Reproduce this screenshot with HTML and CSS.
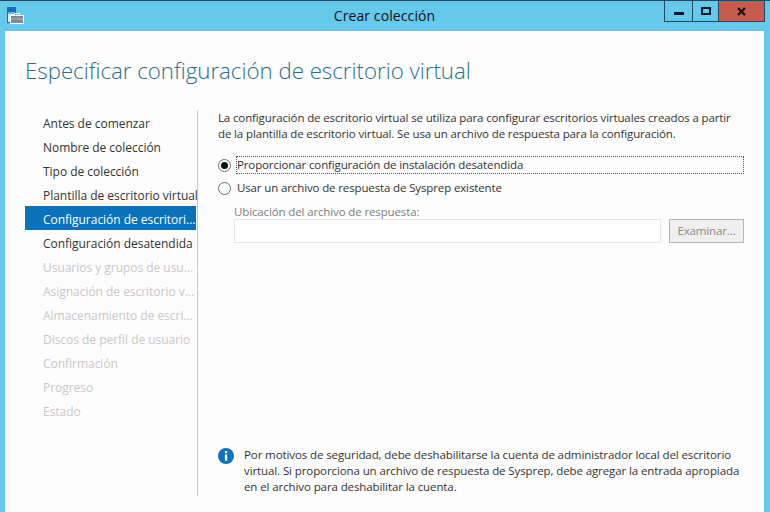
FILE: index.html
```html
<!DOCTYPE html>
<html lang="es">
<head>
<meta charset="utf-8">
<title>Crear colección</title>
<link rel="stylesheet" href="styles.css">
</head>
<body>
<div class="window">
  <header class="titlebar">
    <svg class="appicon" width="17" height="18" viewBox="0 0 17 18">
      <rect x="0.5" y="1.5" width="8" height="15" fill="#d9f1fb" stroke="#1670b8"/>
      <rect x="1" y="2" width="7" height="4" fill="#1670b8"/>
      <path d="M1 7 H8" stroke="#1670b8"/>
      <rect x="3.5" y="9.5" width="13" height="8" fill="#7d8a97" stroke="#fff"/>
      <path d="M4 13 H16" stroke="#aab4bd"/>
      <rect x="7.5" y="7.5" width="5" height="2" fill="none" stroke="#fff"/>
    </svg>
    <div class="wintitle">Crear colección</div>
    <div class="controls">
      <div class="ctl ctl-min"><span class="glyph-min"></span></div>
      <div class="ctl ctl-max"><span class="glyph-max"></span></div>
      <div class="ctl ctl-close"><svg width="9" height="9" viewBox="0 0 9 9"><path d="M1 1 L8 8 M8 1 L1 8" stroke="#111" stroke-width="2.2" fill="none"/></svg></div>
    </div>
  </header>
  <main class="client">
    <h1 class="heading">Especificar configuración de escritorio virtual</h1>
    <div class="columns">
      <nav class="steps">
        <div class="step">Antes de comenzar</div>
        <div class="step">Nombre de colección</div>
        <div class="step">Tipo de colección</div>
        <div class="step">Plantilla de escritorio virtual</div>
        <div class="step active">Configuración de escritori...</div>
        <div class="step">Configuración desatendida</div>
        <div class="step off">Usuarios y grupos de usu...</div>
        <div class="step off">Asignación de escritorio v...</div>
        <div class="step off">Almacenamiento de escri...</div>
        <div class="step off">Discos de perfil de usuario</div>
        <div class="step off">Confirmación</div>
        <div class="step off">Progreso</div>
        <div class="step off">Estado</div>
      </nav>
      <section class="panel">
        <p class="intro">La configuración de escritorio virtual se utiliza para configurar escritorios virtuales creados a partir<br>de la plantilla de escritorio virtual. Se usa un archivo de respuesta para la configuración.</p>
        <div class="radio-row first">
          <span class="radio checked"></span>
          <span class="radio-label focused">Proporcionar configuración de instalación desatendida</span>
        </div>
        <div class="radio-row">
          <span class="radio"></span>
          <span class="radio-label">Usar un archivo de respuesta de Sysprep existente</span>
        </div>
        <div class="filegroup">
          <div class="filelabel">Ubicación del archivo de respuesta:</div>
          <div class="filerow">
            <div class="fileinput"></div>
            <div class="browse">Examinar...</div>
          </div>
        </div>
        <div class="notice">
          <svg class="infoicon" width="16" height="16" viewBox="0 0 16 16">
            <circle cx="8" cy="8" r="8" fill="#0f72bd"/>
            <rect x="6.9" y="3" width="2.3" height="2.3" fill="#fff"/>
            <rect x="6.9" y="6.5" width="2.3" height="6.2" fill="#fff"/>
          </svg>
          <p class="noticetext">Por motivos de seguridad, debe deshabilitarse la cuenta de administrador local del escritorio<br>virtual. Si proporciona un archivo de respuesta de Sysprep, debe agregar la entrada apropiada<br>en el archivo para deshabilitar la cuenta.</p>
        </div>
      </section>
    </div>
  </main>
</div>
</body>
</html>
```
FILE: styles.css
```css
* { box-sizing: border-box; }
html, body { margin: 0; padding: 0; }
body {
  width: 770px;
  height: 512px;
  overflow: hidden;
  font-family: "Open Sans", "Noto Sans", sans-serif;
  font-size: 12px;
  color: #333;
}
.window {
  width: 770px;
  height: 512px;
  background: #65c9ec;
  border-top: 1px solid #1c4a60;
  display: flex;
  flex-direction: column;
  padding: 0 6px 0 5px;
}
.titlebar {
  height: 29px;
  flex: none;
  display: flex;
  align-items: flex-start;
  position: relative;
}
.appicon { margin: 5px 0 0 2px; flex: none; }
.wintitle {
  position: absolute;
  left: 0;
  right: 0;
  top: 5px;
  text-align: center;
  font-size: 14px;
  letter-spacing: 0.1px;
  line-height: 20px;
  color: #111;
}
.controls {
  position: absolute;
  top: 0;
  right: -1px;
  display: flex;
  height: 21px;
  border: 1px solid #1c4a60;
  border-top: 0;
}
.ctl { height: 20px; display: flex; align-items: center; justify-content: center; }
.ctl-min { width: 28px; border-right: 1px solid #1c4a60; }
.ctl-max { width: 26px; border-right: 1px solid #1c4a60; }
.ctl-close { width: 45px; background: #c75b50; }
.glyph-min { display: block; width: 10px; height: 3px; background: #0a1a26; margin-top: 5px; }
.glyph-max { display: block; width: 10px; height: 8px; border: 2px solid #0a1a26; }
.client {
  flex: 1;
  background: #fdfdfd;
  border-top: 1px solid #8fb3c4;
  display: flex;
  flex-direction: column;
  min-height: 0;
  padding: 0 20px 0 20px;
}
.heading {
  margin: 24px 0 0;
  font-size: 22.25px;
  font-weight: 300;
  line-height: 32px;
  color: #2a6e8f;
  white-space: nowrap;
}
.columns { display: flex; margin-top: 23px; flex: 1; min-height: 0; padding-bottom: 16px; }
.steps {
  width: 173px;
  flex: none;
  border-right: 1px solid #c8c8c8;
  letter-spacing: -0.03px;
}
.step {
  height: 24px;
  padding-top: 2px;
  line-height: 24px;
  padding-left: 18px;
  white-space: nowrap;
  overflow: hidden;
  color: #333;
}
.step.active { background: #0a72b8; color: #fff; margin-right: 1px; }
.step.off { color: #c8c8c8; }
.panel {
  flex: 1;
  padding: 0 0 0 20px;
  display: flex;
  flex-direction: column;
  min-width: 0;
  font-size: 11.5px;
  letter-spacing: -0.13px;
}
.intro { margin: 0; line-height: 16px; color: #333; white-space: nowrap; }
.radio-row { display: flex; align-items: center; height: 18px; margin-top: 5px; }
.radio-row.first { margin-top: 14px; }
.radio {
  width: 13px;
  height: 13px;
  border-radius: 50%;
  border: 1px solid #6f6f6f;
  background: #fff;
  flex: none;
  margin-right: 6px;
  position: relative;
}
.radio.checked { margin-right: 5px; }
.radio.checked::after {
  content: "";
  position: absolute;
  left: 2px;
  top: 2px;
  width: 7px;
  height: 7px;
  border-radius: 50%;
  background: #111;
}
.radio-label { white-space: nowrap; line-height: 16px; color: #333; }
.radio-label.focused { flex: 1; border: 1px dotted #555; }
.filegroup { margin: 9px 0 0 16px; }
.filelabel { line-height: 12px; color: #808080; }
.filerow { display: flex; gap: 8px; margin-top: 1px; }
.fileinput { flex: 1; height: 24px; background: #fff; border: 1px solid #e6e6e6; }
.browse {
  width: 75px;
  height: 24px;
  border: 1px solid #b5b5b5;
  background: #efefef;
  color: #888;
  text-align: center;
  line-height: 22px;
}
.notice { margin-top: auto; margin-bottom: 1px; display: flex; gap: 10px; align-items: flex-start; letter-spacing: -0.1px; }
.infoicon { margin-top: 1px; flex: none; }
.noticetext { margin: 0; line-height: 16px; color: #333; white-space: nowrap; }
```
